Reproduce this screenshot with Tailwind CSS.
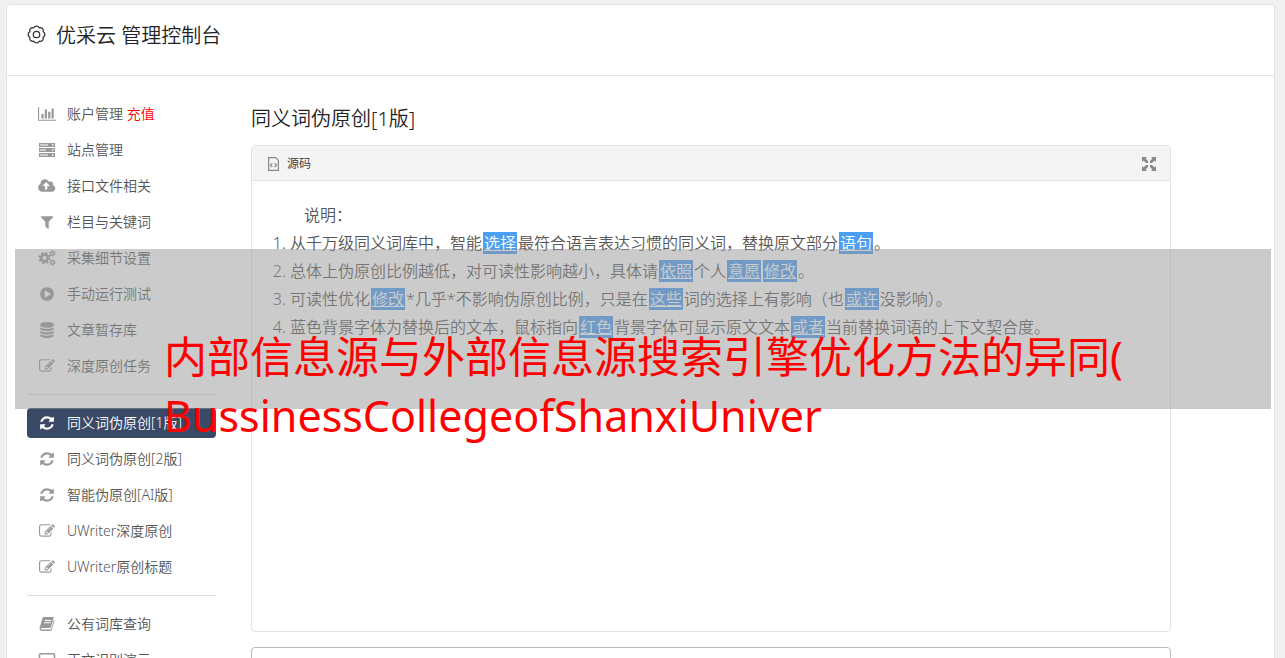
<!DOCTYPE html>
<html lang="zh-CN">

<head>
  <meta charset="UTF-8" />
  <meta name="viewport" content="width=device-width, initial-scale=1" />
  <title>优采云 管理控制台</title>
  <script src="https://cdn.jsdelivr.net/npm/@tailwindcss/browser@4"></script>
</head>

<body class="h-screen overflow-hidden bg-[#f0f0f0] pt-1 pl-1.5 pr-2.5 font-['Noto_Sans','Noto_Sans_CJK_SC',sans-serif] text-sm font-[350] text-[#555]">
  <!-- Iconos reutilizados en el menú -->
  <svg class="hidden">
    <symbol id="i-chart" viewBox="0 0 2048 1792"><path d="M640 896v512h-256v-512h256zm384-512v1024h-256v-1024h256zm1024 1152v128h-2048v-1536h128v1408h1920zm-640-896v768h-256v-768h256zm384-384v1152h-256v-1152h256z" /></symbol>
    <symbol id="i-server" viewBox="0 0 18 16"><path fill-rule="evenodd" d="M1 1h16v4H1zM2 2.500v1h8v-1zM14 2.300v1.400h1.500V2.300zM1 6h16v4H1zM2 7.500v1h6v-1zM14 7.300v1.400h1.500V7.300zM1 11h16v4H1zM2 12.500v1h8v-1zM14 12.300v1.400h1.500v-1.400z" /></symbol>
    <symbol id="i-cloud" viewBox="-32 0 1920 1792"><path d="M1216 864q0-14-9-23l-352-352q-9-9-23-9t-23 9l-351 351q-10 12-10 24 0 14 9 23t23 9h224v352q0 13 9.500 22.500t22.500 9.500h192q13 0 22.500-9.500t9.500-22.500v-352h224q13 0 22.500-9.500t9.500-22.500zm640 288q0 159-112.500 271.500t-271.500 112.500h-1088q-185 0-316.500-131.500t-131.500-316.500q0-130 70-240t188-165q-2-30-2-43 0-212 150-362t362-150q156 0 285.500 87t188.500 231q71-62 166-62 106 0 181 75t75 181q0 76-41 138 130 31 213.500 135.500t83.500 238.500z" /></symbol>
    <symbol id="i-filter" viewBox="0 0 1792 1792"><path d="M1595 295q17 41-14 70l-493 493v742q0 42-39 59-13 5-25 5-27 0-45-19l-256-256q-19-19-19-45v-486l-493-493q-31-29-14-70 17-39 59-39h1280q42 0 59 39z" /></symbol>
    <symbol id="i-cogs" viewBox="0 0 18 16">
      <g fill="none" stroke="currentColor">
        <circle cx="6.500" cy="8" r="3.400" stroke-width="2.600" />
        <circle cx="6.500" cy="8" r="5.200" stroke-width="1.800" stroke-dasharray="2.200 1.884" />
        <circle cx="14.500" cy="3.500" r="1.700" stroke-width="1.400" />
        <circle cx="14.500" cy="3.500" r="2.700" stroke-width="1" stroke-dasharray="1.400 1.427" />
        <circle cx="14.500" cy="12.500" r="1.700" stroke-width="1.400" />
        <circle cx="14.500" cy="12.500" r="2.700" stroke-width="1" stroke-dasharray="1.400 1.427" />
      </g>
    </symbol>
    <symbol id="i-play" viewBox="0 0 1792 1792"><path d="M896 128q209 0 385.500 103t279.500 279.500 103 385.500-103 385.500-279.500 279.500-385.500 103-385.500-103-279.500-279.500-103-385.500 103-385.500 279.500-279.500 385.500-103zm384 823q32-18 32-55t-32-55l-544-320q-31-19-64-1-32 19-32 56v640q0 37 32 56 16 8 32 8 17 0 32-9z" /></symbol>
    <symbol id="i-database" viewBox="0 0 1792 1792"><path d="M896 768q237 0 443-43t325-127v170q0 69-103 128t-280 93.500-385 34.500-385-34.500-280-93.500-103-128v-170q119 84 325 127t443 43zm0 768q237 0 443-43t325-127v170q0 69-103 128t-280 93.500-385 34.500-385-34.500-280-93.500-103-128v-170q119 84 325 127t443 43zm0-384q237 0 443-43t325-127v170q0 69-103 128t-280 93.500-385 34.500-385-34.500-280-93.500-103-128v-170q119 84 325 127t443 43zm0-1152q208 0 385 34.500t280 93.500 103 128v128q0 69-103 128t-280 93.500-385 34.500-385-34.500-280-93.500-103-128v-128q0-69 103-128t280-93.500 385-34.500z" /></symbol>
    <symbol id="i-edit" viewBox="0 0 1792 1792"><path d="M888 1184l116-116-152-152-116 116v56h96v96h56zm440-720q-16-16-33 1l-350 350q-17 17-1 33t33-1l350-350q17-17 1-33zm80 594v190q0 119-84.500 203.500t-203.500 84.500h-832q-119 0-203.500-84.500t-84.500-203.500v-832q0-119 84.500-203.500t203.500-84.500h832q63 0 117 25 15 7 18 23 3 17-9 29l-49 49q-14 14-32 8-23-6-45-6h-832q-66 0-113 47t-47 113v832q0 66 47 113t113 47h832q66 0 113-47t47-113v-126q0-13 9-22l64-64q15-15 35-7t20 29zm-96-738l288 288-672 672h-288v-288zm444 132l-92 92-288-288 92-92q28-28 68-28t68 28l152 152q28 28 28 68t-28 68z" /></symbol>
    <symbol id="i-refresh" viewBox="0 0 1792 1792"><path d="M1639 1056q0 5-1 7-64 268-268 434.500t-478 166.500q-146 0-282.500-55t-243.500-157l-129 129q-19 19-45 19t-45-19-19-45v-448q0-26 19-45t45-19h448q26 0 45 19t19 45-19 45l-137 137q71 66 161 102t187 36q134 0 250-65t186-179q11-17 53-117 8-23 30-23h192q13 0 22.500 9.500t9.500 22.500zm25-800v448q0 26-19 45t-45 19h-448q-26 0-45-19t-19-45 19-45l138-138q-148-137-349-137-134 0-250 65t-186 179q-11 17-53 117-8 23-30 23h-199q-13 0-22.500-9.500t-9.500-22.500v-7q65-268 270-434.500t480-166.500q146 0 284 55.500t245 156.500l130-129q19-19 45-19t45 19 19 45z" /></symbol>
    <symbol id="i-book" viewBox="0 0 16 16"><path fill-rule="evenodd" d="M5 1h8.500q1.300 0 1 1.300l-2.500 8.700q-.3 1-1.300 1H2.800q-1 0-.8.900.2.600 1 .6h8.300q.7 0 .9-.7L14.700 4q.8.400.6 1.200l-2.600 8.600q-.4 1.200-1.600 1.200H2.700Q.4 14.800.5 12.200L3.400 2.200Q3.800 1 5 1zM6 4l-.3 1h6.500l.3-1zM5.400 6.300l-.3 1h6.500l.3-1z" /></symbol>
    <symbol id="i-laptop" viewBox="0 0 18 16"><path fill="none" stroke="currentColor" stroke-width="1.500" d="M2.500 1.700h13q1 0 1 1v8q0 1-1 1h-13q-1 0-1-1v-8q0-1 1-1zM0 14.200h18" /></symbol>
  </svg>

  <div class="min-h-screen rounded border border-[#e3e3e3] bg-white">
    <header class="flex h-[71px] items-start gap-2.5 border-b border-[#e5e5e5] pl-5 pt-4 text-[#222]">
      <svg class="mt-1 h-[19px] w-[19px]" viewBox="0 0 20 20" fill="none" stroke="#333" stroke-width="1.300">
        <path d="M17 7.100A3.200 3.200 0 0 1 17 12.900 3.200 3.200 0 0 1 12.900 17 3.200 3.200 0 0 1 7.100 17 3.200 3.200 0 0 1 3 12.900 3.200 3.200 0 0 1 3 7.100 3.200 3.200 0 0 1 7.100 3 3.200 3.200 0 0 1 12.900 3 3.200 3.200 0 0 1 17 7.100z" />
        <circle cx="10" cy="10" r="3.400" />
      </svg>
      <h1 class="text-xl leading-[30px]">优采云 管理控制台</h1>
    </header>

    <div class="flex items-start gap-[35px] pl-5 pr-[103px]">
      <nav class="w-[189px] shrink-0 pt-[23px]">
        <ul class="flex flex-col gap-1.5 leading-[30px] text-[#555]">
          <li><a href="#" class="flex h-[30px] items-center gap-[11px] pl-[11px]"><svg class="h-4 w-[18px] fill-[#999]"><use href="#i-chart" /></svg><span>账户管理 <span class="text-[#f00]">充值</span></span></a></li>
          <li><a href="#" class="flex h-[30px] items-center gap-[11px] pl-[11px]"><svg class="h-4 w-[18px] fill-[#999]"><use href="#i-server" /></svg>站点管理</a></li>
          <li><a href="#" class="flex h-[30px] items-center gap-[11px] pl-[11px]"><svg class="h-4 w-[18px] fill-[#999]"><use href="#i-cloud" /></svg>接口文件相关</a></li>
          <li><a href="#" class="flex h-[30px] items-center gap-[11px] pl-[11px]"><svg class="h-4 w-[18px] fill-[#999]"><use href="#i-filter" /></svg>栏目与关键词</a></li>
          <li><a href="#" class="flex h-[30px] items-center gap-[11px] pl-[11px]"><svg class="h-4 w-[18px] fill-[#999] text-[#999]"><use href="#i-cogs" /></svg>采集细节设置</a></li>
          <li><a href="#" class="flex h-[30px] items-center gap-[11px] pl-[11px]"><svg class="h-4 w-[18px] fill-[#999]"><use href="#i-play" /></svg>手动运行测试</a></li>
          <li><a href="#" class="flex h-[30px] items-center gap-[11px] pl-[11px]"><svg class="h-4 w-[18px] fill-[#999]"><use href="#i-database" /></svg>文章暂存库</a></li>
          <li><a href="#" class="flex h-[30px] items-center gap-[11px] pl-[11px]"><svg class="h-4 w-[18px] fill-[#999]"><use href="#i-edit" /></svg>深度原创任务</a></li>
          <li class="my-[7px] border-t border-[#ddd]"></li>
          <li><a href="#" class="flex h-[30px] items-center gap-[11px] rounded bg-[#3a4a66] pl-[11px] text-white" aria-current="page"><svg class="h-4 w-[18px] fill-white"><use href="#i-refresh" /></svg>同义词伪原创[1版]</a></li>
          <li><a href="#" class="flex h-[30px] items-center gap-[11px] pl-[11px]"><svg class="h-4 w-[18px] fill-[#999]"><use href="#i-refresh" /></svg>同义词伪原创[2版]</a></li>
          <li><a href="#" class="flex h-[30px] items-center gap-[11px] pl-[11px]"><svg class="h-4 w-[18px] fill-[#999]"><use href="#i-refresh" /></svg>智能伪原创[AI版]</a></li>
          <li><a href="#" class="flex h-[30px] items-center gap-[11px] pl-[11px]"><svg class="h-4 w-[18px] fill-[#999]"><use href="#i-edit" /></svg>UWriter深度原创</a></li>
          <li><a href="#" class="flex h-[30px] items-center gap-[11px] pl-[11px]"><svg class="h-4 w-[18px] fill-[#999]"><use href="#i-edit" /></svg>UWriter原创标题</a></li>
          <li class="my-[7px] border-t border-[#ddd]"></li>
          <li><a href="#" class="flex h-[30px] items-center gap-[11px] pl-[11px]"><svg class="h-4 w-[18px] fill-[#999]"><use href="#i-book" /></svg>公有词库查询</a></li>
          <li><a href="#" class="flex h-[30px] items-center gap-[11px] pl-[11px]"><svg class="h-4 w-[18px] text-[#999]"><use href="#i-laptop" /></svg>正文识别演示</a></li>
        </ul>
      </nav>

      <main class="min-w-0 flex-1 pt-7">
        <h2 class="mb-3 text-xl leading-[29px] text-[#222]">同义词伪原创[1版]</h2>

        <section class="min-h-[487px] rounded border border-[#e3e3e3]">
          <div class="flex h-[35px] items-center justify-between border-b border-[#e3e3e3] bg-[#f4f4f4] pl-4 pr-3.5 pt-0.5">
            <button class="flex items-center gap-2 text-xs text-[#333]">
              <svg class="h-3.5 w-[11px]" viewBox="0 0 11 14" fill="none" stroke="#888" stroke-width="1.200"><path d="M.6.600h7l2.800 2.800v10H.6zM4.300 6.200L2.400 8.200l1.900 2M6.700 6.200l1.900 2-1.900 2" /></svg>
              源码
            </button>
            <button aria-label="全屏">
              <svg class="h-3.5 w-3.5 fill-[#888]" viewBox="0 0 14 14"><path d="M0 0h5L3.600 1.600 6 4v2H4L1.600 3.600 0 5zM14 0v5l-1.600-1.400L10 6H8V4l2.400-2.400L9 0zM0 14V9l1.600 1.400L4 8h2v2l-2.400 2.400L5 14zM14 14H9l1.400-1.600L8 10V8h2l2.400 2.400L14 9z" /></svg>
            </button>
          </div>
          <div class="px-5 pt-5 text-base leading-7">
            <p class="indent-8">说明：</p>
            <ol class="list-decimal pl-[18px]">
              <li>从千万级同义词库中，智能<a href="#" class="mx-px bg-[#4a9ff5] px-px text-white underline">选择</a>最符合语言表达习惯的同义词，替换原文部分<a href="#" class="mx-px bg-[#4a9ff5] px-px text-white underline">语句</a>。</li>
              <li>总体上伪原创比例越低，对可读性影响越小，具体请<a href="#" class="mx-px bg-[#4a9ff5] px-px text-white underline">依照</a>个人<a href="#" class="mx-px bg-[#4a9ff5] px-px text-white underline">意愿</a><a href="#" class="mx-px bg-[#4a9ff5] px-px text-white underline">修改</a>。</li>
              <li>可读性优化<a href="#" class="mx-px bg-[#4a9ff5] px-px text-white underline">修改</a>*几乎*不影响伪原创比例，只是在<a href="#" class="mx-px bg-[#4a9ff5] px-px text-white underline">这些</a>词的选择上有影响（也<a href="#" class="mx-px bg-[#4a9ff5] px-px text-white underline">或许</a>没影响）。</li>
              <li>蓝色背景字体为替换后的文本，鼠标指向<a href="#" class="mx-px bg-[#4a9ff5] px-px text-white underline">红色</a>背景字体可显示原文文本<a href="#" class="mx-px bg-[#4a9ff5] px-px text-white underline">或者</a>当前替换词语的上下文契合度。</li>
            </ol>
          </div>
        </section>

        <section class="mt-[15px] h-24 rounded border border-[#bbb]"></section>
      </main>
    </div>
  </div>

  <!-- Banda gris con el título por encima del panel -->
  <div class="absolute left-[15px] right-3.5 top-[249px] h-40 bg-[#979797]/50 pl-[149px] pt-[78px]">
    <p class="whitespace-nowrap text-[43px] leading-[59px] font-normal text-[#f00]">内部信息源与外部信息源搜索引擎优化方法的异同(<br />BussinessCollegeofShanxiUniver</p>
  </div>
</body>

</html>
